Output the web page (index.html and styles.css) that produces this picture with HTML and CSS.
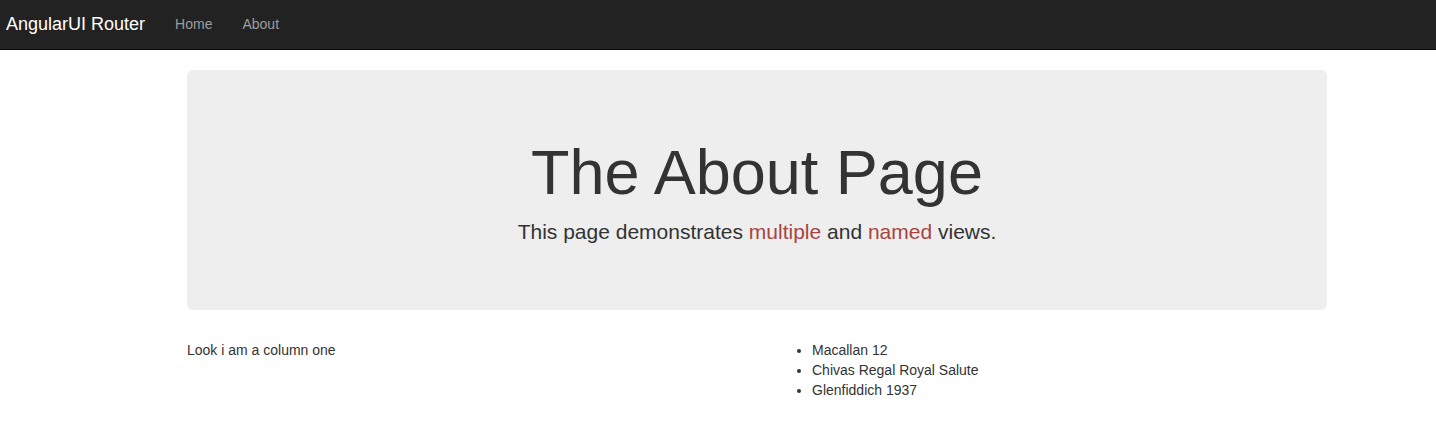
FILE: index.html
```html
<!DOCTYPE html>
<html>
<head>
<meta charset="utf-8">
<link rel="stylesheet" href="styles.css">
</head>
<body>
<nav class="navbar">
  <a class="brand" href="#">AngularUI Router</a>
  <ul class="nav-links">
    <li><a href="#">Home</a></li>
    <li><a href="#">About</a></li>
  </ul>
</nav>
<div class="container">
  <div class="jumbotron">
    <h1>The About Page</h1>
    <p>This page demonstrates <span class="danger">multiple</span> and <span class="danger">named</span> views.</p>
  </div>
  <div class="row">
    <div class="col">Look i am a column one</div>
    <div class="col">
      <ul class="list">
        <li>Macallan 12</li>
        <li>Chivas Regal Royal Salute</li>
        <li>Glenfiddich 1937</li>
      </ul>
    </div>
  </div>
</div>
</body>
</html>
```
FILE: styles.css
```css
* { box-sizing: border-box; }
html, body { margin: 0; padding: 0; }
body {
  font-family: "Liberation Sans", Arial, sans-serif;
  font-size: 14px;
  line-height: 20px;
  color: #333;
  background: #fff;
}
.navbar {
  height: 50px;
  background: #222;
  border-bottom: 1px solid #080808;
  display: flex;
  align-items: flex-start;
  margin-bottom: 20px;
  padding-left: 6px;
}
.brand {
  color: #fff;
  font-size: 18px;
  line-height: 20px;
  padding: 14px 15px 15px 0;
  text-decoration: none;
}
.nav-links {
  list-style: none;
  margin: 0;
  padding: 0;
  display: flex;
}
.nav-links a {
  display: block;
  padding: 14px 15px 15px;
  line-height: 20px;
  color: #9d9d9d;
  text-decoration: none;
}
.container {
  width: 1170px;
  margin-left: 172px;
  padding: 0 15px;
}
.jumbotron {
  background: #eee;
  border-radius: 6px;
  padding: 48px 60px;
  margin-bottom: 30px;
  text-align: center;
}
.jumbotron h1 {
  font-size: 63px;
  font-weight: 500;
  line-height: 1.1;
  margin: 20px 0 10px;
  color: #333;
}
.jumbotron p {
  font-size: 21px;
  font-weight: 200;
  line-height: 1.4;
  margin: 0 0 15px;
}
.danger { color: #a94442; }
.row {
  display: flex;
  margin: 0 -15px;
}
.col {
  width: 50%;
  padding: 0 15px;
}
.list {
  margin: 0 0 10px;
  padding-left: 40px;
}
```
